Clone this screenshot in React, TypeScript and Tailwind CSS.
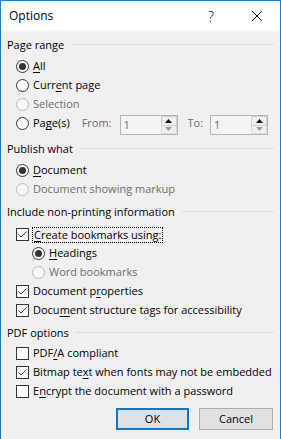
import * as React from "react";

type Mark = "on" | "off" | "disabled";

function Radio({ state }: { state: Mark }) {
  const disabled = state === "disabled";
  return (
    <span
      className={`flex h-[13px] w-[13px] shrink-0 items-center justify-center rounded-full border ${
        disabled ? "border-[#bcbcbc] bg-[#f7f7f7]" : "border-[#333333] bg-white"
      }`}
    >
      {state === "on" && <span className="h-[7px] w-[7px] rounded-full bg-[#333333]" />}
    </span>
  );
}

function Check({ checked }: { checked: boolean }) {
  return (
    <span className="flex h-[13px] w-[13px] shrink-0 items-center justify-center border border-[#333333] bg-white">
      {checked && (
        <svg width="11" height="11" viewBox="0 0 11 11" fill="none">
          <path d="M1.5 5.5 L4 8 L9.5 2.5" stroke="#333333" strokeWidth="1" />
        </svg>
      )}
    </span>
  );
}

function Key({ children }: { children: React.ReactNode }) {
  return <span className="underline decoration-1 underline-offset-[2px]">{children}</span>;
}

function GroupHeader({ label, className = "" }: { label: string; className?: string }) {
  return (
    <div className={`flex h-[19px] items-center ${className}`}>
      <span className="whitespace-nowrap">{label}</span>
      <span className="ml-[7px] mt-[-2px] h-px flex-1 bg-[#dcdcdc]" />
    </div>
  );
}

function SpinBox() {
  return (
    <div className="mt-[1px] flex h-[20px] w-[58px] self-start border border-[#b4b4b4] bg-[#f4f4f4]">
      <span className="flex-1 pl-[3px] text-[#6d6d6d] leading-[18px]">1</span>
      <div className="flex w-[16px] flex-col">
        <span className="flex flex-1 items-center justify-center border border-[#cfcfcf] bg-[#f0f0f0]">
          <svg width="7" height="4" viewBox="0 0 7 4">
            <path d="M0 4 L3.5 0 L7 4 Z" fill="#111" />
          </svg>
        </span>
        <span className="flex flex-1 items-center justify-center border border-t-0 border-[#dcdcdc] bg-[#f0f0f0]">
          <svg width="7" height="4" viewBox="0 0 7 4">
            <path d="M0 0 L7 0 L3.5 4 Z" fill="#9a9a9a" />
          </svg>
        </span>
      </div>
    </div>
  );
}

export default function App() {
  return (
    <div className="h-[439px] w-[281px] overflow-hidden border-x border-t border-[#1a7fd1] bg-[#f0f0f0] font-['Open_Sans',sans-serif] text-[11px] text-black">
      <div className="flex h-[30px] items-center bg-white">
        <span className="pl-[8px] text-[12px]">Options</span>
        <span className="flex-1" />
        <span className="flex w-[46px] justify-center text-[14px] font-light">?</span>
        <span className="flex w-[46px] justify-center">
          <svg width="10" height="10" viewBox="0 0 10 10">
            <path d="M0 0 L10 10 M10 0 L0 10" stroke="#111" strokeWidth="1" />
          </svg>
        </span>
      </div>

      <div className="flex flex-col pl-[6px] pr-[6px] pt-[5px]">
        <GroupHeader label="Page range" />
        <div className="mt-[2px] flex flex-col pl-[9px]">
          <div className="flex h-[19px] items-center gap-[4px]">
            <Radio state="on" />
            <span><Key>A</Key>ll</span>
          </div>
          <div className="flex h-[19px] items-center gap-[4px]">
            <Radio state="off" />
            <span>Curr<Key>e</Key>nt page</span>
          </div>
          <div className="flex h-[19px] items-center gap-[4px] text-[#6d6d6d]">
            <Radio state="disabled" />
            <span>Selection</span>
          </div>
          <div className="flex h-[19px] items-center">
            <Radio state="off" />
            <span className="ml-[4px]">Pa<Key>g</Key>e(s)</span>
            <span className="ml-[12px] text-[#6d6d6d]">From:</span>
            <span className="ml-[8px]" />
            <SpinBox />
            <span className="ml-[10px] text-[#6d6d6d]">To:</span>
            <span className="ml-[7px]" />
            <SpinBox />
          </div>
        </div>

        <GroupHeader label="Publish what" className="mt-[7px]" />
        <div className="mt-[2px] flex flex-col pl-[9px]">
          <div className="flex h-[19px] items-center gap-[4px]">
            <Radio state="on" />
            <span><Key>D</Key>ocument</span>
          </div>
          <div className="flex h-[19px] items-center gap-[4px] text-[#6d6d6d]">
            <Radio state="disabled" />
            <span>Document showing markup</span>
          </div>
        </div>

        <GroupHeader label="Include non-printing information" className="mt-[4px]" />
        <div className="mt-[3px] flex flex-col pl-[9px]">
          <div className="flex h-[19px] items-center gap-[3px]">
            <Check checked />
            <span className="border border-dotted border-black px-[1px] leading-[14px]">
              <Key>C</Key>reate bookmarks using:
            </span>
          </div>
          <div className="flex flex-col pl-[16px]">
            <div className="flex h-[19px] items-center gap-[4px]">
              <Radio state="on" />
              <span><Key>H</Key>eadings</span>
            </div>
            <div className="flex h-[19px] items-center gap-[4px] text-[#6d6d6d]">
              <Radio state="disabled" />
              <span>Word bookmarks</span>
            </div>
          </div>
          <div className="flex h-[19px] items-center gap-[4px]">
            <Check checked />
            <span>Document p<Key>r</Key>operties</span>
          </div>
          <div className="flex h-[19px] items-center gap-[4px]">
            <Check checked />
            <span>Docu<Key>m</Key>ent structure tags for accessibility</span>
          </div>
        </div>

        <GroupHeader label="PDF options" className="mt-[4px]" />
        <div className="mt-[1px] flex flex-col pl-[9px]">
          <div className="flex h-[19px] items-center gap-[4px]">
            <Check checked={false} />
            <span>PDF<Key>/</Key>A compliant</span>
          </div>
          <div className="flex h-[19px] items-center gap-[4px]">
            <Check checked />
            <span>Bitmap te<Key>x</Key>t when fonts may not be embedded</span>
          </div>
          <div className="flex h-[19px] items-center gap-[4px]">
            <Check checked={false} />
            <span>E<Key>n</Key>crypt the document with a password</span>
          </div>
        </div>

        <div className="mt-[7px] flex justify-end gap-[10px] pr-[1px]">
          <button className="h-[22px] w-[73px] border-2 border-[#0078d7] bg-[#e1e1e1] text-[11px]">
            OK
          </button>
          <button className="h-[22px] w-[74px] border border-[#adadad] bg-[#e1e1e1] text-[11px]">
            Cancel
          </button>
        </div>
      </div>
    </div>
  );
}
